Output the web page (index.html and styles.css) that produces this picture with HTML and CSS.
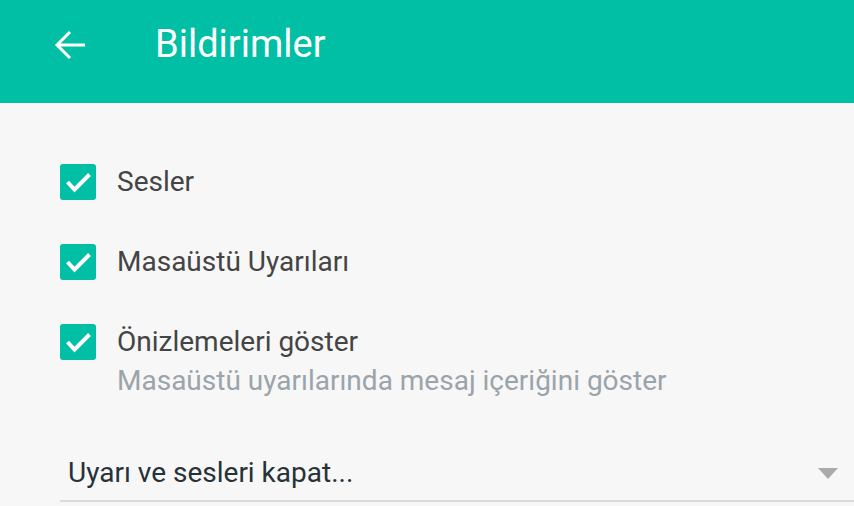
FILE: index.html
```html
<!DOCTYPE html>
<html lang="tr">
<head>
    <meta charset="UTF-8">
    <title>Bildirimler</title>
    <link rel="stylesheet" href="styles.css">
</head>
<body>
<div class="toolbar">
    <button class="back" aria-label="Geri">
        <svg width="32" height="32" viewBox="0 0 32 32">
            <path d="M31 16H3M16 3L3 16l13 13" fill="none" stroke="#fff" stroke-width="3"/>
        </svg>
    </button>
    <h1>Bildirimler</h1>
</div>
<div class="content">
    <label class="option">
        <span class="box"><svg width="36" height="36" viewBox="0 0 36 36"><path d="M7.5 18l7 7.5L29.5 10.5" fill="none" stroke="#fff" stroke-width="4"/></svg></span>
        <span class="text">Sesler</span>
    </label>
    <label class="option">
        <span class="box"><svg width="36" height="36" viewBox="0 0 36 36"><path d="M7.5 18l7 7.5L29.5 10.5" fill="none" stroke="#fff" stroke-width="4"/></svg></span>
        <span class="text">Masaüstü Uyarıları</span>
    </label>
    <label class="option">
        <span class="box"><svg width="36" height="36" viewBox="0 0 36 36"><path d="M7.5 18l7 7.5L29.5 10.5" fill="none" stroke="#fff" stroke-width="4"/></svg></span>
        <span class="text">Önizlemeleri göster
            <span class="hint">Masaüstü uyarılarında mesaj içeriğini göster</span>
        </span>
    </label>
    <div class="select">
        <span>Uyarı ve sesleri kapat...</span>
        <span class="caret"></span>
    </div>
</div>
</body>
</html>
```
FILE: styles.css
```css
html, body {
    margin: 0;
    padding: 0;
    height: 100%;
    overflow: hidden;
    font-family: Roboto, "Noto Sans", sans-serif;
    background-color: #F7F7F7;
}

.toolbar {
    display: flex;
    align-items: center;
    box-sizing: border-box;
    height: 103px;
    padding: 0 0 14px 0;
    background-color: #00BFA5;
    color: white;
}

button.back {
    display: flex;
    padding: 0;
    margin: 0 0 0 54px;
    border: none;
    background: none;
    cursor: pointer;
}

h1 {
    margin: 0 0 2px 69px;
    font-size: 38px;
    font-weight: 400;
}

.content {
    display: flex;
    flex-direction: column;
    padding: 61px 0 0 60px;
}

label.option {
    display: flex;
    align-items: flex-start;
    margin: 0 0 44px 0;
    cursor: pointer;
}

.box {
    display: flex;
    flex-shrink: 0;
    width: 36px;
    height: 36px;
    border-radius: 3px;
    background-color: #00BFA5;
}

.text {
    display: flex;
    flex-direction: column;
    margin: 0 0 0 21px;
    font-size: 28px;
    line-height: 36px;
    color: #444444;
}

.hint {
    margin: 3px 0 0 0;
    color: #9AA4AA;
}

.select {
    display: flex;
    align-items: center;
    justify-content: space-between;
    padding: 12px 16px 9px 8px;
    border-bottom: 2px solid #DADADA;
    font-size: 28px;
    line-height: 36px;
    color: #263238;
}

.caret {
    width: 0;
    height: 0;
    border-left: 10px solid transparent;
    border-right: 10px solid transparent;
    border-top: 11px solid #AAAAAA;
}
```
